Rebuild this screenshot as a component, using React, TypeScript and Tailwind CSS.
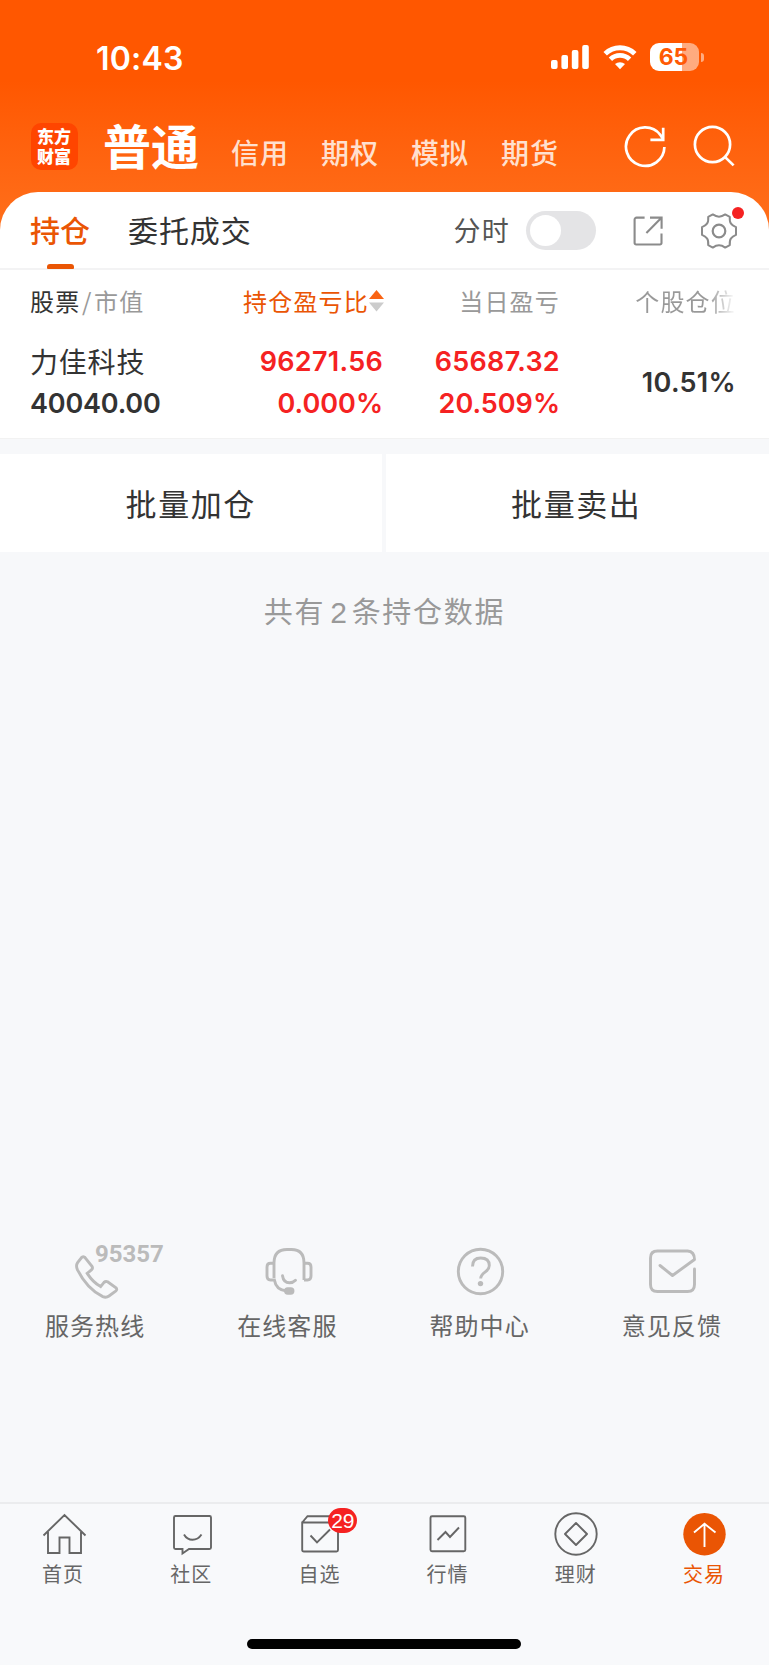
import React from "react";

const accounts = ["信用", "期权", "模拟", "期货"];

const StatusBar: React.FC = () => (
  <div className="flex h-[115px] items-start justify-between pl-[96px] pr-[65px] pt-[38px]">
    <span className="font-['Inter'] text-[32px] leading-[41px] font-semibold tracking-[0.2px] text-white">
      10:43
    </span>
    <div className="flex items-start pt-[5px]">
      {/* Signal */}
      <svg className="mt-[2px] h-6 w-[38px]" viewBox="0 0 38 24" fill="white">
        <rect x="0" y="15" width="6.6" height="9" rx="2" />
        <rect x="10.4" y="10" width="6.6" height="14" rx="2" />
        <rect x="20.8" y="5" width="6.6" height="19" rx="2" />
        <rect x="31.2" y="0" width="6.6" height="24" rx="2" />
      </svg>
      {/* Wifi */}
      <svg className="mt-[2px] ml-[14px] h-[25px] w-[34px]" viewBox="0 0 34 25" fill="none" stroke="white">
        <path d="M2.2 8.8a21.4 21.4 0 0 1 29.6 0" strokeWidth="5" />
        <path d="M7.4 14.2a13.8 13.8 0 0 1 19.2 0" strokeWidth="4.8" />
        <path d="M17 24.3l-5-5.2a7.5 7.5 0 0 1 10 0z" fill="white" stroke="none" />
      </svg>
      {/* Battery */}
      <div className="ml-[13px] flex items-center">
        <div className="flex h-7 w-[49px] items-center justify-center rounded-[9px] bg-linear-to-r from-white from-66% to-white/50 to-66% pr-[2px]">
          <span className="font-['Inter'] text-[23px] leading-7 font-bold text-[#ff5a05]">65</span>
        </div>
        <div className="ml-[2px] h-[9px] w-[3px] rounded-r-full bg-white/50" />
      </div>
    </div>
  </div>
);

const Header: React.FC = () => (
  <header className="flex h-[77px] items-start pl-[31px]">
    <div className="mt-[8px] h-[47px] w-[47px] rounded-[10px] bg-[#ff4500] px-[6px] pt-[3px] text-[17px] leading-[20px] font-black text-white">
      东方财富
    </div>
    <h1 className="ml-[25px] text-[48px] leading-[59px] font-bold text-white">普通</h1>
    <nav className="ml-[32px] flex gap-[32px] pt-[18px]">
      {accounts.map((name) => (
        <span key={name} className="text-[28px] leading-[39px] font-medium tracking-[1px] text-[#ffe0cf]">
          {name}
        </span>
      ))}
    </nav>
    {/* Refresh */}
    <svg className="mt-[10px] ml-[64px] h-[44px] w-[44px]" viewBox="0 0 44 44" fill="none" stroke="white" strokeWidth="2.7">
      <path d="M41.4 22a19.2 19.2 0 1 1-4.1-12.2L40 14" />
      <path d="M40.2 2.8v12H27.4" />
    </svg>
    {/* Search */}
    <svg className="mt-[9px] ml-[25px] h-[44px] w-[44px]" viewBox="0 0 44 44" fill="none" stroke="white" strokeWidth="2.7">
      <circle cx="20.5" cy="20.5" r="17.6" />
      <path d="M32.6 32.6l9 8.8" />
    </svg>
  </header>
);

const Tabs: React.FC = () => (
  <div className="flex h-[78px] items-start border-b-2 border-[#f3f3f4] pl-[30px]">
    <div className="flex h-[77px] flex-col items-center justify-between pt-[16px]">
      <span className="text-[30px] leading-[42px] font-medium text-[#ea5504]">持仓</span>
      <span className="h-[5px] w-[27px] rounded-t-[3px] rounded-b-[1px] bg-[#ea5504]" />
    </div>
    <span className="mt-[16px] ml-[38px] text-[30px] leading-[42px] tracking-[0.9px] text-[#333]">委托成交</span>
    <span className="mt-[17px] ml-[202px] text-[27px] leading-[42px] tracking-[1.2px] text-[#555]">分时</span>
    <div className="mt-[19px] ml-[16px] flex h-[39px] w-[70px] items-center rounded-full bg-[#e4e4e6] pl-[4px]">
      <div className="h-[31px] w-[31px] rounded-full bg-white" />
    </div>
    {/* Open in window */}
    <svg className="mt-[23px] ml-[36px] h-[32px] w-[32px]" viewBox="0 0 32 32" fill="none" stroke="#8b8b8b" strokeWidth="2.1">
      <path d="M12.6 2.6H4.6a2 2 0 0 0-2 2V28a1.5 1.5 0 0 0 1.5 1.5H28a1.500 1.500 0 0 0 1.500-1.500V18.6" />
      <path d="M18 2.6H29.6V13.8M29.2 3L14.4 18" />
    </svg>
    {/* Settings */}
    <div className="relative mt-[19px] ml-[35px]">
      <svg className="h-[40px] w-[40px]" viewBox="-20 -20 40 40" fill="none" stroke="#8b8b8b" strokeWidth="2" strokeLinejoin="round">
        <path d="M0-14.3Q3-14.3 6.2-16.6L10.8-14.2Q10.4-9.4 12-7.4Q13.6-5.2 17-3.9V3.9Q13.6 5.2 12 7.4Q10.4 9.4 10.8 14.2L6.2 16.6Q3 14.3 0 14.3Q-3 14.3-6.2 16.6L-10.8 14.2Q-10.4 9.4-12 7.4Q-13.6 5.2-17 3.9V-3.9Q-13.6-5.2-12-7.4Q-10.4-9.4-10.8-14.2L-6.2-16.6Q-3-14.3 0-14.3Z" />
        <circle r="6.3" strokeWidth="2.2" />
      </svg>
      <span className="absolute -top-[4px] left-[33px] h-3 w-3 rounded-full bg-[#f52222]" />
    </div>
  </div>
);

const Holdings: React.FC = () => (
  <section className="h-[169px] border-b border-[#f2f2f2] pl-[30px]">
    <div className="grid grid-cols-[177px_177px_176px_176px] pt-[13px] text-[24px] leading-[36px] tracking-[1.2px] text-[#999]">
      <span>
        <span className="text-[#333]">股票</span>
        <span className="px-[1.5px]">/</span>市值
      </span>
      <span className="flex items-center justify-end text-[#ea5504]">
        持仓盈亏比
        <svg className="h-[22px] w-[15px] shrink-0" viewBox="0 0 15 22">
          <path d="M7.500 0L15 9H0z" fill="#fa6414" />
          <path d="M7.500 21.500L15 12.500H0z" fill="#ccc" />
        </svg>
      </span>
      <span className="text-right">当日盈亏</span>
      <span className="bg-linear-to-r from-[#999] from-84% to-white bg-clip-text text-right text-transparent">
        个股仓位
      </span>
    </div>
    <div className="mt-[22px] grid grid-cols-[177px_176px_177px_176px] items-center font-['Inter','Noto_Sans_CJK_SC',sans-serif] text-[27px] leading-[42px] font-semibold">
      <div className="text-[#333]">
        <div className="-mt-px mb-px font-['Noto_Sans_CJK_SC',sans-serif] text-[28px] font-normal tracking-[0.8px]">力佳科技</div>
        <div className="tracking-[-0.200px]">40040.00</div>
      </div>
      <div className="text-right text-[#f52222]">
        <div className="tracking-[0.300px]">96271.56</div>
        <div>0.000%</div>
      </div>
      <div className="text-right text-[#f52222]">
        <div className="tracking-[0.300px]">65687.32</div>
        <div>20.509%</div>
      </div>
      <div className="text-right tracking-[0.300px] text-[#333]">10.51%</div>
    </div>
  </section>
);

const services = [
  {
    label: "服务热线",
    icon: (
      <path d="M13.6 12.2Q11.8 11 10.3 12.8L6.6 17.6Q4.6 20.6 6.4 24.6Q16 44 31.8 51.6Q35.2 53 38 51L44.6 46.2Q46.6 44.6 45 42.8L36.6 36.8Q34.6 35.8 33 37.4L29.6 41.6Q22 37.4 16.2 28.4L20.4 25Q22.2 23.2 21 21.4Z" />
    ),
  },
  {
    label: "在线客服",
    icon: (
      <>
        <path d="M11 33V18Q11 4.500 24 4.500H28.500Q41 4.500 41 18V35" />
        <path d="M11 18.200H7.500Q4 18.200 4 22V31Q4 35 7.500 35H11.400Q13 45 23.500 46" />
        <path d="M41 18.200H44.500Q48 18.200 48 22V31Q48 35 44.500 35H41" />
        <path d="M19.500 30.800Q20.500 37.800 26.500 37.800Q30 37.800 32.500 35.200" strokeLinecap="round" />
        <rect x="22.500" y="43.700" width="7.500" height="4.500" rx="2.200" fill="#bbb" />
      </>
    ),
  },
  {
    label: "帮助中心",
    icon: (
      <>
        <circle cx="24.500" cy="26.500" r="22.200" />
        <path d="M16.500 21.500Q16.500 13 24.700 13Q33.300 13 33.300 20.600Q33.300 24 29 27.200Q24.700 30.400 24.700 33.500" />
        <circle cx="24.500" cy="38.600" r="2.700" fill="#bbb" stroke="none" />
      </>
    ),
  },
  {
    label: "意见反馈",
    icon: (
      <path d="M46.500 24V39.500Q46.500 46.500 39.500 46.500H9.500Q2.500 46.500 2.500 39.500V13Q2.500 6 9.500 6H39.500Q46.500 6.500 46.500 14.500L24.500 30.500L12 20.500" strokeLinejoin="round" strokeLinecap="round" />
    ),
  },
];

const ServiceLinks: React.FC = () => (
  <section className="grid grid-cols-4">
    {services.map(({ label, icon }, i) => (
      <div key={label} className="relative flex flex-col items-center">
        <svg className="h-[56px] w-[50px]" viewBox="0 0 50 56" fill="none" stroke="#bbb" strokeWidth="2.9">
          {icon}
        </svg>
        {i === 0 && (
          <span className="absolute -top-[1px] left-[95px] font-['Roboto'] text-[24px] leading-[20px] font-bold text-[#bbb]">
            95357
          </span>
        )}
        <span className="mt-[6px] pr-[2px] text-[24px] leading-[36px] tracking-[1.100px] text-[#666]">{label}</span>
      </div>
    ))}
  </section>
);

const tabs = [
  {
    label: "首页",
    icon: <path d="M1.500 23.500L22.500 3L43.500 23.500M6 20V41H17.500V25.500H27.500V41H39V20" />,
  },
  {
    label: "社区",
    icon: (
      <>
        <path d="M5.500 4H39.500Q41 4 41 5.500V35.500Q41 37 39.500 37H19L12.500 41.500V37H5.500Q4 37 4 35.500V5.500Q4 4 5.500 4Z" />
        <path d="M14 22.500Q17 27.800 22.500 27.800Q28 27.800 31.500 22.500" />
      </>
    ),
  },
  {
    label: "自选",
    icon: (
      <>
        <path d="M4.200 10.500H38.500Q40 10.500 40 12V38Q40 39.500 38.500 39.500H6Q4.200 39.500 4.200 38ZL9.500 4.200H34.500L40 10.500" />
        <path d="M12.500 23.500L19 30.500L32 17.500" />
      </>
    ),
  },
  {
    label: "行情",
    icon: (
      <>
        <rect x="4.500" y="4.200" width="34.800" height="35" rx="1.500" />
        <path d="M11.500 28L19.500 20L24 25L33 15.500" />
      </>
    ),
  },
  {
    label: "理财",
    icon: (
      <>
        <circle cx="22" cy="22" r="20.700" />
        <path d="M22 11L33 22L22 33L11 22Z" strokeLinejoin="round" />
      </>
    ),
  },
  {
    label: "交易",
    active: true,
    icon: (
      <>
        <circle cx="22.500" cy="22.200" r="21.200" fill="#ea5504" stroke="none" />
        <path d="M22.500 35V12M12 20.500L22.500 11.800L33.500 20.500" stroke="white" />
      </>
    ),
  },
];

const TabBar: React.FC = () => (
  <footer className="flex h-[163px] flex-col items-center justify-between border-t-2 border-[#ebecee] bg-[#f8f9fb] pb-[16px]">
    <div className="grid w-full grid-cols-6 pt-[8px]">
      {tabs.map(({ label, icon, active }) => (
        <div key={label} className="relative flex flex-col items-center">
          <svg className="h-[44px] w-[45px]" viewBox="0 0 45 44" fill="none" stroke="#666" strokeWidth="1.9">
            {icon}
          </svg>
          <span
            className={`mt-[3px] pr-[2px] text-[20px] leading-[30px] tracking-[1px] ${active ? "text-[#ea5504]" : "text-[#666]"}`}
          >
            {label}
          </span>
          {label === "自选" && (
            <span className="absolute -top-[4px] left-[72px] h-[25px] w-[29px] rounded-full bg-[#f52222] text-center font-['Liberation_Sans'] text-[21px] leading-[26px] text-white">
              29
            </span>
          )}
        </div>
      ))}
    </div>
    <div className="mr-px h-[10px] w-[274px] rounded-full bg-black" />
  </footer>
);

const App: React.FC = () => (
  <div className="flex h-[1665px] w-[769px] flex-col bg-[#f7f8fa] font-['Noto_Sans_CJK_SC',sans-serif]">
    <div className="bg-linear-to-b from-[#ff5700] from-30% to-[#ff6f1a] to-85%">
      <StatusBar />
      <Header />
      <div className="rounded-t-[38px] bg-white">
        <Tabs />
      </div>
    </div>
    <div className="bg-white">
      <Holdings />
    </div>

    <div className="mt-[15px] flex h-[98px] gap-[4px] text-[31px] tracking-[1.600px] text-[#333]">
      <button className="flex-1 bg-white">批量加仓</button>
      <button className="flex-1 bg-white pr-[2px]">批量卖出</button>
    </div>
    <p className="mt-[37px] text-center text-[29px] leading-[42px] tracking-[1.700px] text-[#999]">
      共有<span className="pr-[3px] pl-[5px] font-['Liberation_Sans'] text-[30px]">2</span>条持仓数据
    </p>

    <div className="mt-auto mb-[159px]">
      <ServiceLinks />
    </div>
    <TabBar />
  </div>
);

export default App;
